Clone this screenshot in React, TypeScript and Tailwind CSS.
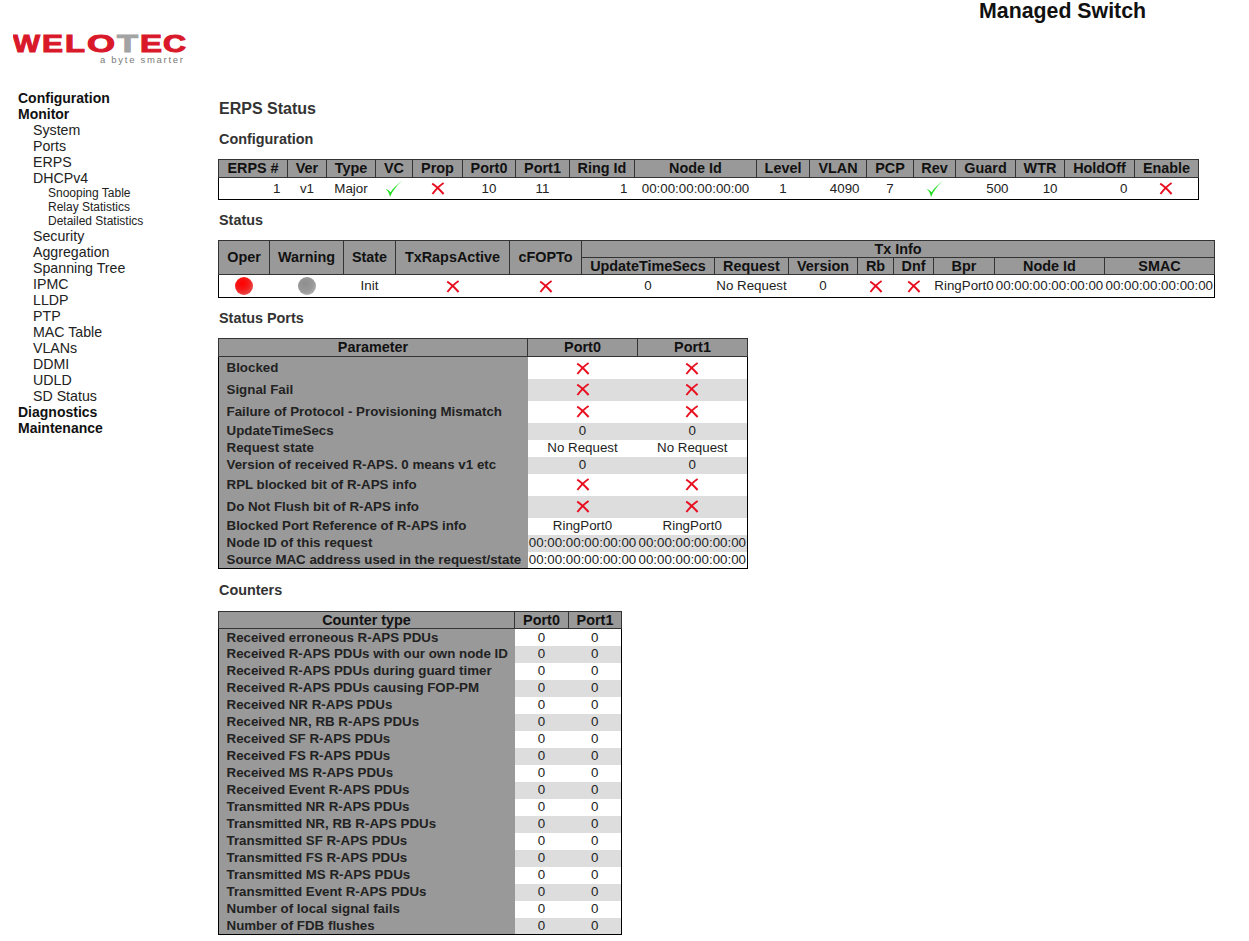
const X = () => (
  <svg width="14" height="13" viewBox="0 0 14 13" className="inline-block align-middle">
    <path d="M1.2 1.6C5 3.8 9.2 8.2 12.6 12" stroke="#e81020" strokeWidth="2" fill="none" />
    <path d="M12.6 1C9 3.2 4.5 8 1.4 12" stroke="#e81020" strokeWidth="2" fill="none" />
  </svg>
);

const Check = () => (
  <svg width="18" height="18" viewBox="0 0 18 18" className="inline-block align-middle">
    <path d="M0.5 9C2.6 10.4 4 12.6 5 17C7.5 11 11.5 5.5 17.5 0.5C12 4.5 8 8.5 5.6 12.2C4.4 10.8 2.8 9.6 0.5 9Z" fill="#22dd22" />
  </svg>
);

const Dot = ({ red }: { red?: boolean }) => (
  <span
    className={`inline-block w-[18px] h-[18px] rounded-full align-middle ${
      red
        ? 'bg-[radial-gradient(circle_at_40%_35%,#ff0000_0%,#f51818_40%,#dc7070_100%)]'
        : 'bg-[radial-gradient(circle_at_40%_35%,#8e8e8e_0%,#999999_50%,#c0c0c0_100%)]'
    }`}
  />
);

const nav = [
  { t: 'Configuration', l: 0 },
  { t: 'Monitor', l: 0 },
  { t: 'System', l: 1 },
  { t: 'Ports', l: 1 },
  { t: 'ERPS', l: 1 },
  { t: 'DHCPv4', l: 1 },
  { t: 'Snooping Table', l: 2 },
  { t: 'Relay Statistics', l: 2 },
  { t: 'Detailed Statistics', l: 2 },
  { t: 'Security', l: 1 },
  { t: 'Aggregation', l: 1 },
  { t: 'Spanning Tree', l: 1 },
  { t: 'IPMC', l: 1 },
  { t: 'LLDP', l: 1 },
  { t: 'PTP', l: 1 },
  { t: 'MAC Table', l: 1 },
  { t: 'VLANs', l: 1 },
  { t: 'DDMI', l: 1 },
  { t: 'UDLD', l: 1 },
  { t: 'SD Status', l: 1 },
  { t: 'Diagnostics', l: 0 },
  { t: 'Maintenance', l: 0 },
];

const th = 'bg-[#999999] border border-[#333333] p-0 font-bold text-[14.4px] leading-none text-[#111111] whitespace-nowrap text-center';
const td = 'p-0 text-[13.33px] leading-none text-[#222222] whitespace-nowrap text-center';
const tdR = 'p-0 pr-[7px] text-[13.33px] leading-none text-[#222222] whitespace-nowrap text-right';
const label = 'p-0 pl-[7.5px] bg-[#999999] font-bold text-[13.33px] leading-none text-[#222222] whitespace-nowrap text-left';
const heading = 'mt-[11px] mb-[11px] h-[18px] pl-px font-bold text-[14.4px] leading-[18px] text-[#333333]';

const portRows: [string, string | null, string][] = [
  ['Blocked', null, 'h-[22px]'],
  ['Signal Fail', null, 'h-[22px]'],
  ['Failure of Protocol - Provisioning Mismatch', null, 'h-[22px]'],
  ['UpdateTimeSecs', '0', 'h-[17px]'],
  ['Request state', 'No Request', 'h-[17px]'],
  ['Version of received R-APS. 0 means v1 etc', '0', 'h-[17px]'],
  ['RPL blocked bit of R-APS info', null, 'h-[22px]'],
  ['Do Not Flush bit of R-APS info', null, 'h-[22px]'],
  ['Blocked Port Reference of R-APS info', 'RingPort0', 'h-[17px]'],
  ['Node ID of this request', '00:00:00:00:00:00', 'h-[17px]'],
  ['Source MAC address used in the request/state', '00:00:00:00:00:00', 'h-[17px]'],
];

const counters = [
  'Received erroneous R-APS PDUs',
  'Received R-APS PDUs with our own node ID',
  'Received R-APS PDUs during guard timer',
  'Received R-APS PDUs causing FOP-PM',
  'Received NR R-APS PDUs',
  'Received NR, RB R-APS PDUs',
  'Received SF R-APS PDUs',
  'Received FS R-APS PDUs',
  'Received MS R-APS PDUs',
  'Received Event R-APS PDUs',
  'Transmitted NR R-APS PDUs',
  'Transmitted NR, RB R-APS PDUs',
  'Transmitted SF R-APS PDUs',
  'Transmitted FS R-APS PDUs',
  'Transmitted MS R-APS PDUs',
  'Transmitted Event R-APS PDUs',
  'Number of local signal fails',
  'Number of FDB flushes',
];

export default function App() {
  return (
    <div className="w-[1249px] h-[941px] overflow-hidden bg-white font-['Liberation_Sans',Arial,sans-serif]">
      {/* Top bar */}
      <div className="flex h-[90px]">
        <div className="w-[218px] shrink-0 pt-[27px] pl-[13px]">
          <svg width="176" height="44" viewBox="0 0 176 44">
            <g fontFamily="'Liberation Sans', Arial, sans-serif" fontWeight="700" fontSize="23" fill="#d9182a" stroke="#d9182a" strokeWidth="1">
              <text x="0" y="25" textLength="27" lengthAdjust="spacingAndGlyphs">W</text>
              <text x="29" y="25" textLength="21" lengthAdjust="spacingAndGlyphs">E</text>
              <text x="52" y="25" textLength="20" lengthAdjust="spacingAndGlyphs">L</text>
              <text x="74" y="25" textLength="28" lengthAdjust="spacingAndGlyphs">O</text>
              <text x="104" y="25" textLength="21" lengthAdjust="spacingAndGlyphs" fill="#a3a3a3" stroke="#a3a3a3">T</text>
              <text x="127" y="25" textLength="22" lengthAdjust="spacingAndGlyphs">E</text>
              <text x="150" y="25" textLength="23" lengthAdjust="spacingAndGlyphs">C</text>
            </g>
            <text x="87" y="36" fontFamily="'Liberation Sans', Arial, sans-serif" fontSize="9.5" fill="#7a7a7a" textLength="83">a byte smarter</text>
          </svg>
        </div>
        <div className="flex-1 pl-[761px] font-bold text-[21.33px] leading-[23px] text-[#111111] whitespace-nowrap">
          Managed Switch
        </div>
      </div>

      <div className="flex">
        {/* Side nav */}
        <div className="w-[218px] shrink-0">
          {nav.map(n =>
            n.l === 0 ? (
              <div key={n.t} className="pl-[18px] h-[16px] font-bold text-[14px] leading-[16px] text-[#111111]">{n.t}</div>
            ) : n.l === 1 ? (
              <div key={n.t} className="pl-[33px] h-[16px] text-[14.2px] leading-[16px] text-[#222222]">{n.t}</div>
            ) : (
              <div key={n.t} className="pl-[48px] h-[14px] text-[12px] leading-[14px] text-[#222222]">{n.t}</div>
            )
          )}
        </div>

        <div className="flex-1 pt-[9px]">
          <div className="h-[20px] pl-px font-bold text-[16px] leading-[20px] text-[#333333]">ERPS Status</div>
          <div className={heading}>Configuration</div>

          <table className="table-fixed w-[980px] border border-black">
            <colgroup>
              <col className="w-[69px]" /><col className="w-[39px]" /><col className="w-[49px]" /><col className="w-[37px]" />
              <col className="w-[50px]" /><col className="w-[53px]" /><col className="w-[54px]" /><col className="w-[65px]" />
              <col className="w-[122px]" /><col className="w-[53px]" /><col className="w-[57px]" /><col className="w-[47px]" />
              <col className="w-[42px]" /><col className="w-[60px]" /><col className="w-[49px]" /><col className="w-[70px]" />
              <col className="w-[64px]" />
            </colgroup>
            <thead>
              <tr className="h-[18px]">
                {['ERPS #', 'Ver', 'Type', 'VC', 'Prop', 'Port0', 'Port1', 'Ring Id', 'Node Id', 'Level', 'VLAN', 'PCP', 'Rev', 'Guard', 'WTR', 'HoldOff', 'Enable'].map(h => (
                  <th key={h} className={th}>{h}</th>
                ))}
              </tr>
            </thead>
            <tbody>
              <tr className="h-[22px]">
                <td className={tdR}>1</td>
                <td className={td}>v1</td>
                <td className={td}>Major</td>
                <td className={td}><Check /></td>
                <td className={td}><X /></td>
                <td className={td}>10</td>
                <td className={td}>11</td>
                <td className={tdR}>1</td>
                <td className={td}>00:00:00:00:00:00</td>
                <td className={td}>1</td>
                <td className={tdR}>4090</td>
                <td className={td}>7</td>
                <td className={td}><Check /></td>
                <td className={tdR}>500</td>
                <td className={tdR}>10</td>
                <td className={tdR}>0</td>
                <td className={td}><X /></td>
              </tr>
            </tbody>
          </table>

          <div className={heading}>Status</div>

          <table className="table-fixed w-[996px] border border-black">
            <colgroup>
              <col className="w-[51px]" /><col className="w-[74px]" /><col className="w-[52px]" /><col className="w-[114px]" />
              <col className="w-[72px]" /><col className="w-[133px]" /><col className="w-[74px]" /><col className="w-[69px]" />
              <col className="w-[36px]" /><col className="w-[40px]" /><col className="w-[61px]" /><col className="w-[110px]" />
              <col className="w-[110px]" />
            </colgroup>
            <thead>
              <tr className="h-[17px]">
                {['Oper', 'Warning', 'State', 'TxRapsActive', 'cFOPTo'].map(h => (
                  <th key={h} rowSpan={2} className={th}>{h}</th>
                ))}
                <th colSpan={8} className={th}>Tx Info</th>
              </tr>
              <tr className="h-[17px]">
                {['UpdateTimeSecs', 'Request', 'Version', 'Rb', 'Dnf', 'Bpr', 'Node Id', 'SMAC'].map(h => (
                  <th key={h} className={th}>{h}</th>
                ))}
              </tr>
            </thead>
            <tbody>
              <tr className="h-[23px]">
                <td className={td}><Dot red /></td>
                <td className={td}><Dot /></td>
                <td className={td}>Init</td>
                <td className={td}><X /></td>
                <td className={td}><X /></td>
                <td className={td}>0</td>
                <td className={td}>No Request</td>
                <td className={td}>0</td>
                <td className={td}><X /></td>
                <td className={td}><X /></td>
                <td className={td}>RingPort0</td>
                <td className={td}>00:00:00:00:00:00</td>
                <td className={td}>00:00:00:00:00:00</td>
              </tr>
            </tbody>
          </table>

          <div className={heading}>Status Ports</div>

          <table className="table-fixed w-[529px] border border-black">
            <colgroup>
              <col className="w-[309px]" /><col className="w-[110px]" /><col className="w-[110px]" />
            </colgroup>
            <thead>
              <tr className="h-[18px]">
                <th className={th}>Parameter</th>
                <th className={th}>Port0</th>
                <th className={th}>Port1</th>
              </tr>
            </thead>
            <tbody>
              {portRows.map(([name, value, h], i) => (
                <tr key={name} className={`${h} ${i % 2 ? 'bg-[#dddddd]' : 'bg-white'}`}>
                  <td className={label}>{name}</td>
                  <td className={td}>{value ?? <X />}</td>
                  <td className={td}>{value ?? <X />}</td>
                </tr>
              ))}
            </tbody>
          </table>

          <div className="mt-[12px] mb-[12px] h-[18px] pl-px font-bold text-[14.4px] leading-[18px] text-[#333333]">Counters</div>

          <table className="table-fixed w-[403px] border border-black">
            <colgroup>
              <col className="w-[296px]" /><col className="w-[54px]" /><col className="w-[53px]" />
            </colgroup>
            <thead>
              <tr className="h-[17px]">
                <th className={th}>Counter type</th>
                <th className={th}>Port0</th>
                <th className={th}>Port1</th>
              </tr>
            </thead>
            <tbody>
              {counters.map((c, i) => (
                <tr key={c} className={`h-[17px] ${i % 2 ? 'bg-[#dddddd]' : 'bg-white'}`}>
                  <td className={label}>{c}</td>
                  <td className={td}>0</td>
                  <td className={td}>0</td>
                </tr>
              ))}
            </tbody>
          </table>
        </div>
      </div>
    </div>
  );
}
